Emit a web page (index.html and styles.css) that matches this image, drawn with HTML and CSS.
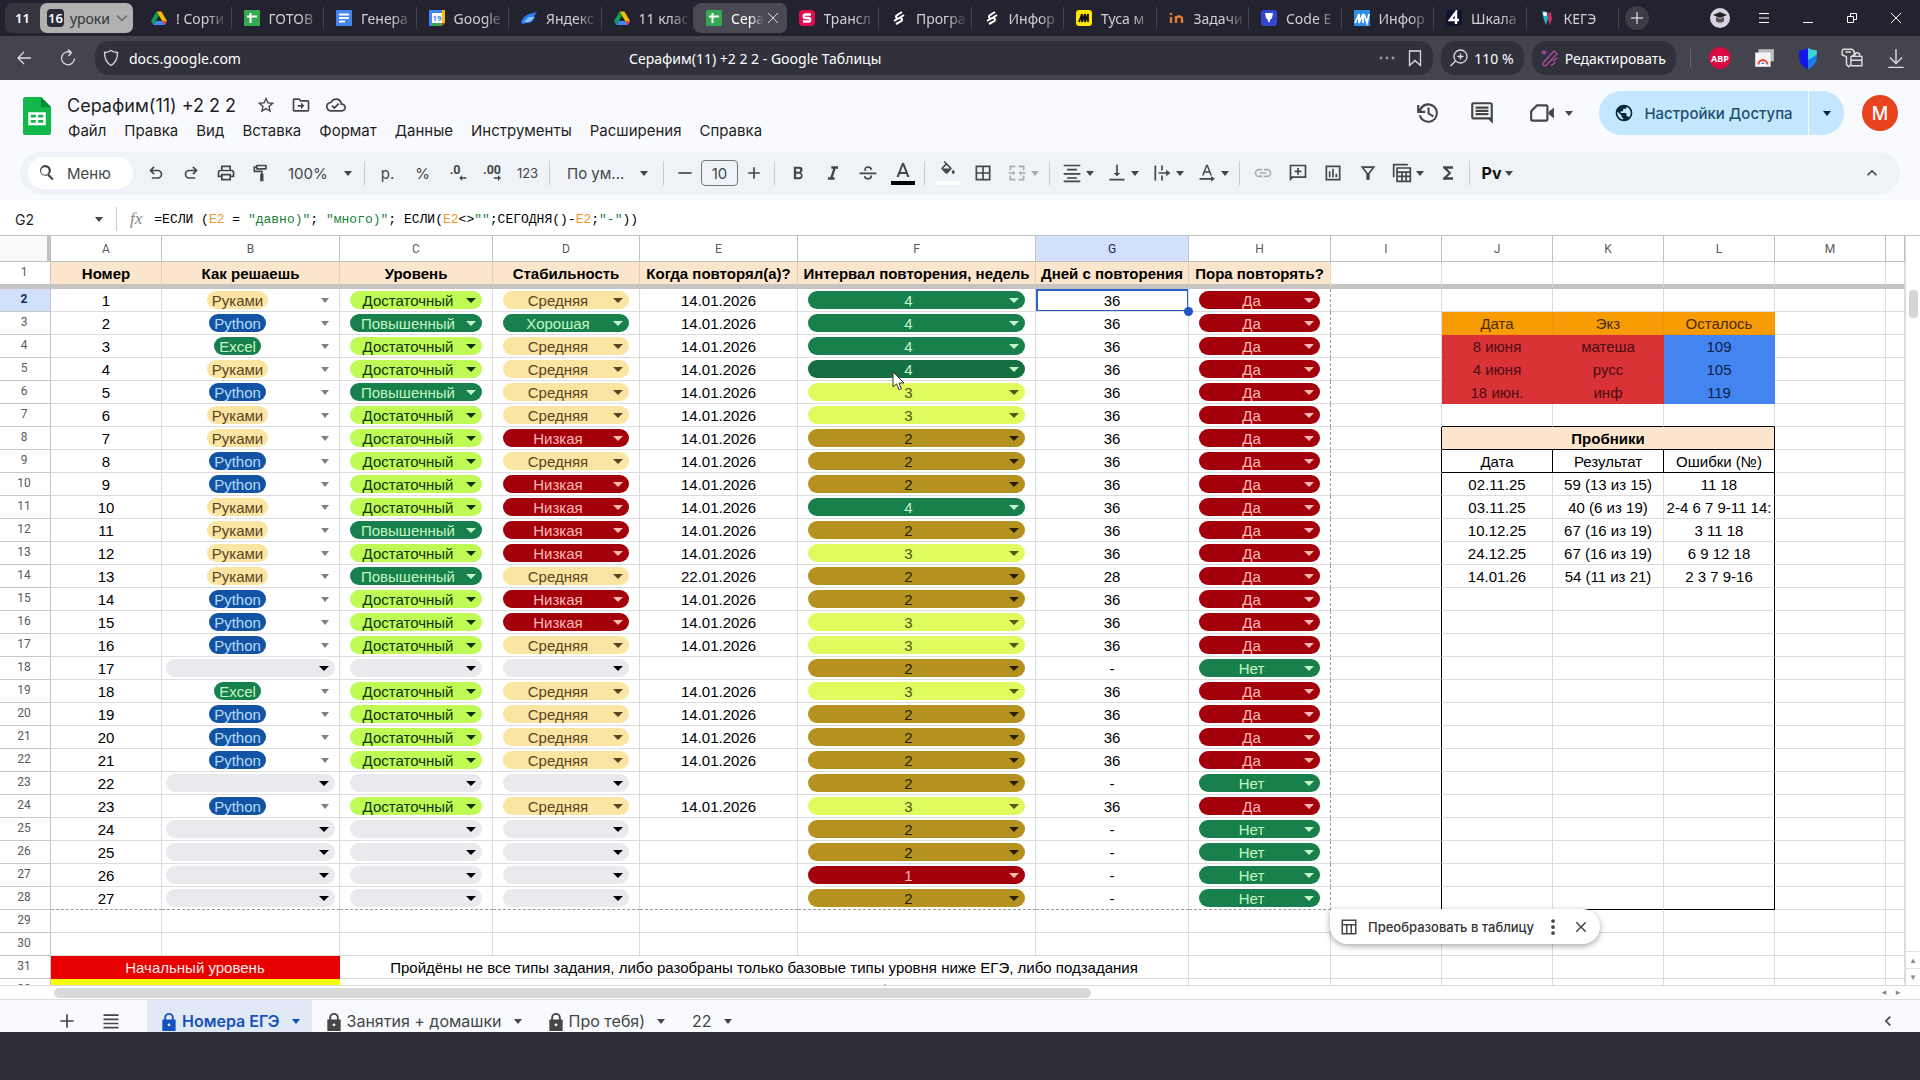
FILE: index.html
```html
<!DOCTYPE html>
<html lang="ru">
<head>
  <meta charset="UTF-8" />
  <meta name="viewport" content="width=device-width, initial-scale=1.0" />
  <title>Серафим(11) +2 2 2 - Google Таблицы</title>
  <link rel="stylesheet" href="styles.css">
</head>
<body>
  <!-- Browser tabs -->
  <div class="tabbar">
    <div class="tab-group">
      <button class="group-count">11</button>
      <button class="group-open"><b>16</b> уроки
        <svg width="12" height="8" viewBox="0 0 12 8"><path d="M1 1.5l5 5 5-5" fill="none" stroke="#666" stroke-width="1.4"/></svg>
      </button>
    </div>
    <nav class="tabs">
      <a class="tab" href="#"><svg viewBox="0 0 16 16"><path d="M5.6 1.5h4.8L16 11h-4.8z" fill="#fbbc04"/><path d="M5.6 1.5L0 11l2.4 4L8 5.6z" fill="#0f9d58"/><path d="M4.8 11H16l-2.4 4H2.4z" fill="#4285f4"/><path d="M11.2 11H16l-2.4 4z" fill="#ea4335"/></svg><span>! Сорти</span></a>
      <a class="tab" href="#"><svg viewBox="0 0 16 16"><rect width="16" height="16" rx="1" fill="#34a853"/><path d="M6.5 3v10M3 6.5h10" stroke="#fff" stroke-width="2"/></svg><span>ГОТОВ</span></a>
      <a class="tab" href="#"><svg viewBox="0 0 16 16"><rect width="16" height="16" rx="1" fill="#4285f4"/><path d="M3 4.5h10M3 8h10M3 11.5h6" stroke="#fff" stroke-width="2"/></svg><span>Генера</span></a>
      <a class="tab" href="#"><svg viewBox="0 0 16 16"><path d="M0 0h13v3H3v13H0z" fill="#4285f4"/><path d="M13 0h3v13h-3z" fill="#fbbc04"/><path d="M3 13h10v3H3z" fill="#34a853"/><path d="M13 13h3l-3 3z" fill="#ea4335"/><rect x="3" y="3" width="10" height="10" fill="#fff"/><text x="8" y="11" class="cal-day">19</text></svg><span>Google</span></a>
      <a class="tab" href="#"><svg viewBox="0 0 16 16"><path d="M0 12C3 5 7 4 16 2l-3 4 1 1c-2 5-5 6-8 6l-5 1z" fill="#2f7df6"/><path d="M3 12l5-5 5 0c-2 4-5 5-7 5z" fill="#8ec5ff"/></svg><span>Яндекс</span></a>
      <a class="tab" href="#"><svg viewBox="0 0 16 16"><path d="M5.6 1.5h4.8L16 11h-4.8z" fill="#fbbc04"/><path d="M5.6 1.5L0 11l2.4 4L8 5.6z" fill="#0f9d58"/><path d="M4.8 11H16l-2.4 4H2.4z" fill="#4285f4"/><path d="M11.2 11H16l-2.4 4z" fill="#ea4335"/></svg><span>11 клас</span></a>
      <a class="tab active" href="#"><svg viewBox="0 0 16 16"><rect width="16" height="16" rx="1" fill="#34a853"/><path d="M6.5 3v10M3 6.5h10" stroke="#fff" stroke-width="2"/></svg><span>Сера</span><i class="tab-close"></i></a>
      <a class="tab" href="#"><svg viewBox="0 0 16 16"><rect width="16" height="16" rx="4" fill="#e5094f"/><path d="M12 4.5H6.5a1.7 1.7 0 0 0 0 3.5h3a1.7 1.7 0 0 1 0 3.5H4" fill="none" stroke="#fff" stroke-width="2.4"/></svg><span>Трансл</span></a>
      <a class="tab" href="#"><svg viewBox="0 0 16 16"><path d="M11 2L5.500 5.500a2 2 0 0 0 1 3.200l3-1a2 2 0 0 1 1 3.300L5 14M13 5l-4 2.500M3 11l4-2.500" fill="none" stroke="#fff" stroke-width="2"/></svg><span>Програ</span></a>
      <a class="tab" href="#"><svg viewBox="0 0 16 16"><path d="M11 2L5.500 5.500a2 2 0 0 0 1 3.200l3-1a2 2 0 0 1 1 3.300L5 14M13 5l-4 2.500M3 11l4-2.500" fill="none" stroke="#fff" stroke-width="2"/></svg><span>Инфор</span></a>
      <a class="tab" href="#"><svg viewBox="0 0 16 16"><rect width="16" height="16" rx="3" fill="#ffe600"/><path d="M3 12l3-8v8l3-8v8l3-8v8" fill="none" stroke="#111" stroke-width="1.8"/></svg><span>Туса м</span></a>
      <a class="tab" href="#"><svg viewBox="0 0 16 16"><path d="M2 7v6M2 3v2M7 13V6M7 9c0-3 6-3.500 6 0v4" fill="none" stroke="#e07b39" stroke-width="2.400"/></svg><span>Задачи</span></a>
      <a class="tab" href="#"><svg viewBox="0 0 16 16"><rect width="16" height="16" rx="3" fill="#3346d3"/><path d="M4 3h8l-1 5-2 2v2H7v-2L5 8z" fill="#fff"/></svg><span>Code E</span></a>
      <a class="tab" href="#"><svg viewBox="0 0 16 16"><rect width="16" height="16" fill="#2f8fe6"/><path d="M1 13l4-9v9l4-9v9M10 4l3 9 2-9" fill="none" stroke="#fff" stroke-width="1.800"/></svg><span>Инфор</span></a>
      <a class="tab" href="#"><svg viewBox="0 0 16 16"><rect width="16" height="16" rx="3" fill="#12122e"/><path d="M10 14V2L4 10h9" fill="none" stroke="#fff" stroke-width="2.400"/></svg><span>Шкала</span></a>
      <a class="tab" href="#"><svg viewBox="0 0 16 16"><path d="M3 1l5 1 1 6-2 7-2-5z" fill="#28b4c8"/><path d="M9 3l3-1 1 7-2 6-2-5z" fill="#c0305a"/><circle cx="6" cy="4" r="2" fill="#fff"/></svg><span>КЕГЭ</span></a>
    </nav>
    <div class="window-tools">
      <button class="new-tab" aria-label="Новая вкладка"><svg viewBox="0 0 16 16"><path d="M8 2v12M2 8h12"/></svg></button>
      <button aria-label="Профиль"><svg class="profile" viewBox="0 0 20 20"><circle cx="10" cy="10" r="10" fill="#d8d2e0" stroke="none"/><path d="M10 4l7 3-7 3-7-3z" fill="#222" stroke="none"/><path d="M6 9v4c2 2 6 2 8 0V9l-4 2z" fill="#555" stroke="none"/></svg></button>
      <button aria-label="Меню"><svg viewBox="0 0 16 16"><path d="M3 3.500h10M3 8h10M3 12.500h10"/></svg></button>
      <button aria-label="Свернуть"><svg viewBox="0 0 16 16"><path d="M3 12.500h10"/></svg></button>
      <button aria-label="Развернуть"><svg viewBox="0 0 16 16"><path d="M3.500 6.500h6v6h-6zM6.500 6.500v-3h6v6h-3"/></svg></button>
      <button aria-label="Закрыть"><svg viewBox="0 0 16 16"><path d="M3 3l10 10M13 3L3 13"/></svg></button>
    </div>
  </div>

  <!-- Address bar -->
  <div class="navbar">
    <button class="nav-btn" aria-label="Назад"><svg viewBox="0 0 20 20"><path d="M17 10H4M10 4l-6 6 6 6"/></svg></button>
    <button class="nav-btn" aria-label="Обновить"><svg viewBox="0 0 20 20"><path d="M16.500 10.500a6.500 6.500 0 1 1-3.500-6M10 1.500l3.500 3-3 3.500"/></svg></button>
    <div class="address">
      <svg viewBox="0 0 20 20"><path d="M10 2.500c2 1.300 4 2 6.500 2 0 5-1.500 10-6.500 13-5-3-6.500-8-6.500-13 2.500 0 4.500-.7 6.500-2z"/></svg>
      <span class="host">docs.google.com</span>
      <span class="page-title">Серафим(11) +2 2 2 - Google Таблицы</span>
      <svg viewBox="0 0 20 20"><g fill="#999" stroke="none"><circle cx="4" cy="10" r="1.400"/><circle cx="10" cy="10" r="1.400"/><circle cx="16" cy="10" r="1.400"/></g></svg>
      <svg viewBox="0 0 20 20"><path d="M4.500 3h11v14.500L10 12.500l-5.500 5z"/></svg>
    </div>
    <button class="nav-pill"><svg viewBox="0 0 20 20"><path d="M7 12.500L1.500 18M11.500 2a6.500 6.500 0 1 1 0 13 6.500 6.500 0 0 1 0-13zM11.500 5.500v6M8.500 8.500h6"/></svg>110 %</button>
    <button class="nav-pill"><svg viewBox="0 0 20 20"><path d="M3 15L14 3l3 3L6 17.500c-1.500 1-4-1-3-2.500zM13 13l4-3M4 2v5M1.500 4.500h5M11 17c2 0 3-1 4-3" stroke="#b04aa6"/></svg>Редактировать</button>
    <i class="nav-sep"></i>
    <button class="nav-btn ext" aria-label="Adblock Plus"><svg viewBox="0 0 22 22"><circle cx="11" cy="11" r="11" fill="#d90b42" stroke="none"/><text x="11" y="14.500" class="abp">ABP</text></svg></button>
    <button class="nav-btn ext" aria-label="Снимок экрана"><svg viewBox="0 0 20 20"><path d="M5 2h14v11H5z" fill="#bbb" stroke="none"/><path d="M2 5h14v13H2z" fill="#f4f4f4" stroke="none"/><path d="M4 16a5 5 0 0 1 10 0z" fill="#e8453c" stroke="none"/><path d="M6.500 16a2.500 2.500 0 0 1 5 0z" fill="#4285f4" stroke="#fff"/></svg></button>
    <button class="nav-btn ext" aria-label="Защита"><svg viewBox="0 0 20 20"><path d="M10 1c-2.500 1.500-5 2-8 2v6c0 5 3 9 8 11z" fill="#1016e8" stroke="none"/><path d="M10 1c2.500 1.500 5 2 8 2v6c0 5-3 9-8 11z" fill="#1e7bea" stroke="none"/><path d="M10 1c2.500 1.500 5 2 8 2v4l-8 5z" fill="#3fd0d8" stroke="none"/></svg></button>
    <button class="nav-btn ext" aria-label="Пароли"><svg viewBox="0 0 20 20"><path d="M2 2h8l2 2v3l-3 2v7l-2 2-2-2V9L1 7V3.500zM4 4.500h5M12.500 8.500V7.500a2 2 0 0 1 4.500 0v1M9 8.500h10V17H9M9 12h10"/></svg></button>
    <button class="nav-btn ext" aria-label="Загрузки"><svg viewBox="0 0 20 20"><path d="M10 2v13M4.500 9.500L10 15l5.500-5.500M3 18.500h14"/></svg></button>
  </div>

  <!-- Document header -->
  <header class="doc-header">
    <svg class="sheets-logo" viewBox="0 0 28 38"><path d="M2.500 0H18l10 10v25.500a2.500 2.500 0 0 1-2.500 2.500h-23A2.500 2.500 0 0 1 0 35.500v-33A2.500 2.500 0 0 1 2.500 0z" fill="#12b74a"/><path d="M18 0l10 10H18z" fill="#078a35"/><path d="M6.500 16.500h15v10.500h-15zM14 16.500V27M6.500 21.800h15" fill="none" stroke="#fff" stroke-width="2.500"/></svg>
    <div class="doc-info">
      <div class="doc-title">
        <h1>Серафим(11) +2 2 2</h1>
        <button class="icon-btn small" aria-label="Пометить"><svg viewBox="0 0 24 24"><path d="M22 9.240l-7.190-.62L12 2 9.190 8.630 2 9.240l5.460 4.730L5.820 21 12 17.270 18.180 21l-1.630-7.030L22 9.240zM12 15.400l-3.760 2.270 1-4.280-3.320-2.880 4.380-.38L12 6.100l1.710 4.040 4.380.38-3.320 2.880 1 4.280L12 15.400z"/></svg></button>
        <button class="icon-btn small" aria-label="Переместить"><svg viewBox="0 0 24 24"><path d="M20 6h-8l-2-2H4c-1.100 0-2 .9-2 2v12c0 1.100.9 2 2 2h16c1.100 0 2-.9 2-2V8c0-1.100-.9-2-2-2zm0 12H4V6h5.200l2 2H20v10zm-8-1l4-4-4-4v3H8v2h4z"/></svg></button>
        <button class="icon-btn small" aria-label="Сохранено"><svg viewBox="0 0 24 24"><path d="M19.350 10.040A7.490 7.490 0 0 0 12 4C9.110 4 6.600 5.640 5.350 8.040A5.994 5.994 0 0 0 0 14c0 3.310 2.690 6 6 6h13c2.760 0 5-2.240 5-5 0-2.640-2.050-4.780-4.650-4.960zM19 18H6c-2.210 0-4-1.790-4-4s1.790-4 4-4h.71C7.370 7.690 9.480 6 12 6c3.040 0 5.500 2.460 5.500 5.500v.5H19c1.660 0 3 1.340 3 3s-1.340 3-3 3zm-9-3.800L7.900 12.100 6.500 13.500 10 17l6-6-1.400-1.400z"/></svg></button>
      </div>
      <nav class="menu">
        <a href="#">Файл</a><a href="#">Правка</a><a href="#">Вид</a><a href="#">Вставка</a><a href="#">Формат</a><a href="#">Данные</a><a href="#">Инструменты</a><a href="#">Расширения</a><a href="#">Справка</a>
      </nav>
    </div>
    <div class="doc-actions">
      <button class="icon-btn" aria-label="История версий"><svg viewBox="0 0 24 24"><path d="M12.500 3A9 9 0 0 0 4 8.300V4.500H2V12h7.500v-2H5.600A7 7 0 1 1 5.500 14H3.400a9 9 0 1 0 9.100-11zM11.500 7v6l5 3 1-1.600-4-2.400V7z"/></svg></button>
      <button class="icon-btn" aria-label="Комментарии"><svg viewBox="0 0 24 24"><path d="M22 4c0-1.100-.9-2-2-2H4c-1.100 0-2 .9-2 2v12c0 1.100.9 2 2 2h14l4 4V4zM4 16V4h16v12zm2-4h12v2H6zm0-3h12v2H6zm0-3h12v2H6z"/></svg></button>
      <button class="icon-btn meet" aria-label="Видеовстреча"><svg viewBox="0 0 24 24"><path d="M7 4h9c1.100 0 2 .9 2 2v12c0 1.100-.9 2-2 2H3c-1.100 0-2-.9-2-2v-8zm.8 2L3 10.800V18h13V6z"/><path d="M18 11l5-4v10l-5-4z"/></svg><i class="caret"></i></button>
      <div class="share">
        <button class="share-main"><svg viewBox="0 0 24 24"><path d="M12 2a10 10 0 1 0 0 20 10 10 0 0 0 0-20zm-1 17.930A7.990 7.990 0 0 1 4.210 10.200L9 15v1c0 1.100.9 2 2 2v1.930zm6.900-2.540A2 2 0 0 0 16 16h-1v-3c0-.55-.45-1-1-1H8v-2h2c.55 0 1-.45 1-1V7h2c1.100 0 2-.9 2-2v-.41a7.990 7.990 0 0 1 2.900 12.800z"/></svg>Настройки Доступа</button>
        <button class="share-more" aria-label="Ещё"><i class="caret"></i></button>
      </div>
      <button class="avatar">M</button>
    </div>
  </header>

  <!-- Toolbar -->
  <div class="toolbar-wrap">
    <div class="toolbar">
      <button class="menu-search"><svg viewBox="0 0 24 24"><path d="M15.500 14h-.79l-.28-.27A6.500 6.500 0 1 0 13 14.700l.27.28v.79l5 5L20 19.300zM9.500 14a4.500 4.500 0 1 1 0-9 4.500 4.500 0 0 1 0 9z"/></svg>Меню</button>
      <button class="tool" aria-label="Отменить"><svg viewBox="0 0 24 24"><path d="M7 19v-2h7.100a3.500 3.500 0 0 0 0-7H7.800l2.600 2.600L9 14 4 9l5-5 1.400 1.400L7.800 8h6.300a5.500 5.500 0 0 1 0 11z"/></svg></button>
      <button class="tool" aria-label="Повторить"><svg viewBox="0 0 24 24"><path d="M17 19v-2H9.900a3.500 3.500 0 0 1 0-7h6.300l-2.600 2.600L15 14l5-5-5-5-1.400 1.400L16.200 8H9.900a5.500 5.500 0 0 0 0 11z"/></svg></button>
      <button class="tool" aria-label="Печать"><svg viewBox="0 0 24 24"><path d="M19 8h-1V3H6v5H5a3 3 0 0 0-3 3v6h4v4h12v-4h4v-6a3 3 0 0 0-3-3zM8 5h8v3H8zm8 14H8v-4h8zm2-4v-2H6v2H4v-4c0-.55.45-1 1-1h14c.55 0 1 .45 1 1v4z"/></svg></button>
      <button class="tool" aria-label="Формат по образцу"><svg viewBox="0 0 24 24"><path d="M18 2H7a1 1 0 0 0-1 1v1H3v7h9v2h-1v9h4v-9h-1V9H5V6h1v1a1 1 0 0 0 1 1h11a1 1 0 0 0 1-1V3a1 1 0 0 0-1-1zm-1 4H8V4h9z"/></svg></button>
      <label class="tool-select zoom"><select aria-label="Масштаб"><option>100%</option></select><i class="caret"></i></label>
      <i class="sep"></i>
      <button class="tool">р.</button>
      <button class="tool">%</button>
      <button class="tool" aria-label="Меньше знаков"><svg viewBox="0 0 24 24"><text x="2" y="13" class="dec">.0</text><path d="M22 17h-5v-2.500L13.500 18l3.500 3.500V19h5z"/></svg></button>
      <button class="tool" aria-label="Больше знаков"><svg viewBox="0 0 24 24"><text x="0" y="13" class="dec">.00</text><path d="M13 17h5v-2.500l3.500 3.500-3.500 3.500V19h-5z"/></svg></button>
      <button class="tool n123">123</button>
      <i class="sep"></i>
      <label class="tool-select font"><select aria-label="Шрифт"><option>По ум...</option></select><i class="caret"></i></label>
      <i class="sep"></i>
      <button class="tool step" aria-label="Меньше"><svg viewBox="0 0 24 24"><path d="M4 11h16v2H4z"/></svg></button>
      <input class="font-size" type="text" value="10" aria-label="Размер шрифта">
      <button class="tool step" aria-label="Больше"><svg viewBox="0 0 24 24"><path d="M5 11h6V5h2v6h6v2h-6v6h-2v-6H5z"/></svg></button>
      <i class="sep"></i>
      <button class="tool" aria-label="Полужирный"><svg viewBox="0 0 24 24"><path d="M15.600 11.800A4 4 0 0 0 17.500 8.500 4 4 0 0 0 13.500 4.500H7v15h7.100a4.200 4.200 0 0 0 1.500-7.700zM9.800 7h3a1.800 1.800 0 0 1 0 3.600h-3zm3.700 10H9.800v-4h3.700a2 2 0 0 1 0 4z"/></svg></button>
      <button class="tool" aria-label="Курсив"><svg viewBox="0 0 24 24"><path d="M10 4v3h2.210l-3.420 10H6v3h8v-3h-2.210l3.420-10H18V4z"/></svg></button>
      <button class="tool" aria-label="Зачеркнутый"><svg viewBox="0 0 24 24"><path d="M2 11.500h20v2H2zM12 4c3 0 5 1.500 5 4h-2.300c0-1.300-1-2-2.700-2s-2.700.7-2.700 1.700c0 .7.500 1.200 1.500 1.600H7.500C7 6 9 4 12 4zM14.600 15h2.300c.5 3-1.800 5-4.900 5s-5-1.700-5-4h2.300c0 1.300 1 2 2.700 2 2 0 3-1 2.600-3z"/></svg></button>
      <button class="tool text-color" aria-label="Цвет текста"><svg viewBox="0 0 24 24"><path d="M11 2L5.500 16h2.250l1.120-3h6.250l1.120 3h2.250L13 2zm-1.380 9L12 4.670 14.380 11z"/><path d="M0 20h24v4H0z" fill="#000"/></svg></button>
      <i class="sep"></i>
      <button class="tool text-color" aria-label="Заливка"><svg viewBox="0 0 24 24"><g transform="translate(3 0) scale(.75)"><path d="M16.560 8.940L7.620 0 6.210 1.410l2.380 2.380-5.150 5.150a1.490 1.490 0 0 0 0 2.120l5.500 5.500a1.500 1.500 0 0 0 2.120 0l5.500-5.500c.59-.58.59-1.530 0-2.120zM5.210 10L10 5.210 14.790 10zM19 11.500s-2 2.170-2 3.500a2 2 0 0 0 4 0c0-1.330-2-3.500-2-3.500z"/></g><path d="M0 20h24v4H0z" fill="#fff"/></svg></button>
      <button class="tool" aria-label="Границы"><svg viewBox="0 0 24 24"><path d="M3 3v18h18V3zm8 16H5v-6h6zm0-8H5V5h6zm8 8h-6v-6h6zm0-8h-6V5h6z"/></svg></button>
      <button class="tool wide off" aria-label="Объединить"><svg viewBox="0 0 24 24"><path d="M3 3h7v2H5v4H3zM14 3h7v6h-2V5h-5zM3 15h2v4h5v2H3zM19 15h2v6h-7v-2h5zM2 11h5V9l3 3-3 3v-2H2zM22 11h-5V9l-3 3 3 3v-2h5z"/></svg><i class="caret"></i></button>
      <i class="sep"></i>
      <button class="tool wide" aria-label="По горизонтали"><svg viewBox="0 0 24 24"><path d="M2 2h20v2H2zM6 7h12v2H6zM2 12h20v2H2zM6 17h12v2H6zM2 21h20v2H2z"/></svg><i class="caret"></i></button>
      <button class="tool wide" aria-label="По вертикали"><svg viewBox="0 0 24 24"><path d="M16 12h-3V2h-2v10H8l4 4zM3 19v2h18v-2z"/></svg><i class="caret"></i></button>
      <button class="tool wide" aria-label="Перенос"><svg viewBox="0 0 24 24"><path d="M3 3h2v18H3zM11 3h2v6h-2zM11 15h2v6h-2zM8 11h9V8l5 4-5 4v-3H8z"/></svg><i class="caret"></i></button>
      <button class="tool wide" aria-label="Поворот текста"><svg viewBox="0 0 24 24"><path d="M11 2L6 15h2l1.200-3.200h5.600L16 15h2L13 2zm-1.200 8L12 4.300 14.200 10zM3 18h14v-2.500l4.500 3.500-4.500 3.500V20H3z"/></svg><i class="caret"></i></button>
      <i class="sep"></i>
      <button class="tool off" aria-label="Ссылка"><svg viewBox="0 0 24 24"><path d="M3.900 12A3.100 3.100 0 0 1 7 8.900h4V7H7a5 5 0 0 0 0 10h4v-1.900H7A3.100 3.100 0 0 1 3.900 12zM8 13h8v-2H8zm9-6h-4v1.900h4a3.100 3.100 0 0 1 0 6.200h-4V17h4a5 5 0 0 0 0-10z"/></svg></button>
      <button class="tool" aria-label="Комментарий"><svg viewBox="0 0 24 24"><path d="M22 2H2v20l4-4h16zM4 4h16v12H4zM11 6h2v3h3v2h-3v3h-2v-3H8V9h3z"/></svg></button>
      <button class="tool" aria-label="Диаграмма"><svg viewBox="0 0 24 24"><path d="M3 3v18h18V3zm16 16H5V5h14zM7 10h2v7H7zm4-3h2v10h-2zm4 6h2v4h-2z"/></svg></button>
      <button class="tool" aria-label="Фильтр"><svg viewBox="0 0 24 24"><path d="M3 4l7 9v7h4v-7l7-9zm4.100 2h9.800L12 12.300z"/></svg></button>
      <button class="tool wide" aria-label="Режимы фильтрации"><svg viewBox="0 0 24 24"><path d="M1 1h18v2H3v14H1zM5 5v18h18V5zm2 2h14v3H7zm0 5h4v3H7zm6 0h3v3h-3zm5 0h3v3h-3zM7 17h4v4H7zm6 0h3v4h-3zm5 0h3v4h-3z" fill-rule="evenodd"/></svg><i class="caret"></i></button>
      <button class="tool" aria-label="Функции"><svg viewBox="0 0 24 24"><path d="M18 4H6v2l6.500 6L6 18v2h12v-3h-7l5-5-5-5h7z"/></svg></button>
      <i class="sep"></i>
      <button class="tool wide pv"><b>Pv</b><i class="caret"></i></button>
      <button class="tool collapse" aria-label="Скрыть меню"><svg viewBox="0 0 24 24"><path d="M12 8l-6 6 1.410 1.410L12 10.830l4.590 4.580L18 14z"/></svg></button>
    </div>
  </div>

  <!-- Formula bar -->
  <div class="formula-bar">
    <input class="name-box" type="text" value="G2" aria-label="Имя ячейки">
    <i class="caret"></i>
    <i class="sep"></i>
    <em class="fx">fx</em>
    <div class="formula" role="textbox" contenteditable="true" spellcheck="false" aria-label="Формула">=ЕСЛИ (<span class="ref">E2</span> = <span class="str">"давно)"</span>; <span class="str">"много)"</span>; ЕСЛИ(<span class="ref">E2</span>&lt;&gt;<span class="str">""</span>;СЕГОДНЯ()-<span class="ref">E2</span>;<span class="str">"-"</span>))</div>
  </div>

  <!-- Grid -->
  <main class="grid-area">
    <div class="grid">
      <table class="sheet">
        <colgroup>
          <col class="w-num"><col class="w-a"><col class="w-b"><col class="w-c"><col class="w-d"><col class="w-e"><col class="w-f"><col class="w-c"><col class="w-h"><col class="w-a"><col class="w-a"><col class="w-a"><col class="w-a"><col class="w-a"><col>
        </colgroup>
        <thead>
          <tr class="letters"><th class="corner"></th><th>A</th><th>B</th><th>C</th><th>D</th><th>E</th><th>F</th><th class="sel">G</th><th>H</th><th>I</th><th>J</th><th>K</th><th>L</th><th>M</th><th></th></tr>
          <tr class="frozen"><th class="num">1</th><th>Номер</th><th>Как решаешь</th><th>Уровень</th><th>Стабильность</th><th>Когда повторял(а)?</th><th>Интервал повторения, недель</th><th>Дней с повторения</th><th class="edge">Пора повторять?</th><td></td><td></td><td></td><td></td><td></td><td></td></tr>
        </thead>
        <tbody id="rows"></tbody>
      </table>
    </div>
    <div class="vscroll"><i class="thumb"></i><i class="arrow">▴</i><i class="arrow">▾</i></div>
  </main>
  <div class="hscroll"><i class="thumb"></i><i class="arrow">◂</i><i class="arrow">▸</i></div>

  <!-- Sheet tabs -->
  <footer class="sheet-tabs">
    <button class="icon-btn small add" aria-label="Добавить лист"><svg viewBox="0 0 24 24"><path d="M4 11h7V4h2v7h7v2h-7v7h-2v-7H4z"/></svg></button>
    <button class="icon-btn small all" aria-label="Все листы"><svg viewBox="0 0 24 24"><path d="M3 4h18v2H3zM3 9h18v2H3zM3 14h18v2H3zM3 19h18v2H3z"/></svg></button>
    <a class="sheet-tab active" href="#"><svg viewBox="0 0 14 20"><path d="M2 8V6a5 5 0 0 1 10 0v2h2v12H0V8zm2 0h6V6a3 3 0 0 0-6 0zm3 4a1.500 1.500 0 1 0 0 3 1.500 1.500 0 0 0 0-3z"/></svg>Номера ЕГЭ<i class="caret"></i></a>
    <a class="sheet-tab" href="#"><svg viewBox="0 0 14 20"><path d="M2 8V6a5 5 0 0 1 10 0v2h2v12H0V8zm2 0h6V6a3 3 0 0 0-6 0zm3 4a1.500 1.500 0 1 0 0 3 1.500 1.500 0 0 0 0-3z"/></svg>Занятия + домашки<i class="caret"></i></a>
    <a class="sheet-tab" href="#"><svg viewBox="0 0 14 20"><path d="M2 8V6a5 5 0 0 1 10 0v2h2v12H0V8zm2 0h6V6a3 3 0 0 0-6 0zm3 4a1.500 1.500 0 1 0 0 3 1.500 1.500 0 0 0 0-3z"/></svg>Про тебя)<i class="caret"></i></a>
    <a class="sheet-tab" href="#">22<i class="caret"></i></a>
    <button class="icon-btn small side" aria-label="Боковая панель"><svg viewBox="0 0 24 24"><path d="M15.400 7.400L14 6l-6 6 6 6 1.400-1.400L10.800 12z"/></svg></button>
  </footer>
  <div class="bottom-strip"></div>

  <script src="script.js"></script>
</body>
</html>
```
FILE: styles.css
```css
* {
  box-sizing: border-box;
}
body {
  margin: 0;
  height: 100vh;
  display: flex;
  flex-direction: column;
  overflow: hidden;
  font-family: Inter, Roboto, sans-serif;
  font-size: 15px;
  color: #1f1f1f;
  background: #fff;
}
button, input, select {
  font: inherit;
  color: inherit;
  border: none;
  background: none;
  padding: 0;
  margin: 0;
}
button {
  cursor: pointer;
  white-space: nowrap;
}
a {
  color: inherit;
  text-decoration: none;
}
svg {
  flex: none;
}
.caret {
  flex: none;
  border: 4px solid transparent;
  border-top: 5px solid #444746;
  border-bottom: none;
}

/* browser tabs */
.tabbar {
  display: flex;
  align-items: center;
  height: 36px;
  padding: 0 2px 0 5px;
  background: #23232f;
  color: #d0d0d6;
  font-family: "Noto Sans", sans-serif;
  font-size: 14px;
}
.tab-group {
  display: flex;
  height: 30px;
  border-radius: 7px;
  background: #35353f;
}
.group-count {
  width: 35px;
  font-size: 13px;
  font-weight: 600;
  color: #fff;
}
.group-open {
  display: flex;
  align-items: center;
  gap: 6px;
  width: 93px;
  padding-left: 7px;
  border-radius: 7px;
  background: #b1b1b3;
  color: #333;
}
.group-open b {
  padding: 0 1px;
  border-radius: 4px;
  background: #2b2b35;
  color: #fff;
  font-size: 13px;
  font-weight: 600;
}
.tabs {
  flex: 1;
  display: flex;
  margin-left: 6px;
}
.tab {
  flex: 1;
  display: flex;
  align-items: center;
  gap: 9px;
  min-width: 0;
  height: 30px;
  padding-left: 12px;
  position: relative;
}
.tab::after {
  content: "";
  position: absolute;
  right: 0;
  top: 4px;
  height: 22px;
  border-right: 1px solid #44444f;
}
.tab svg {
  width: 16px;
  height: 16px;
}
.tab span {
  width: 52px;
  white-space: nowrap;
  mask-image: linear-gradient(to right, #000 60%, transparent);
}
.tab.active {
  background: #4a4a55;
  border-radius: 7px;
  color: #fff;
}
.tab.active::after {
  display: none;
}
.tab.active span {
  width: 33px;
}
.tab-close {
  width: 10px;
  height: 10px;
  margin-left: -5px;
  background:
    linear-gradient(45deg, transparent 46%, #ddd 46%, #ddd 54%, transparent 54%),
    linear-gradient(-45deg, transparent 46%, #ddd 46%, #ddd 54%, transparent 54%);
}
.cal-day {
  font: bold 8px Roboto, sans-serif;
  fill: #4285f4;
  text-anchor: middle;
}
.window-tools {
  display: flex;
  width: 299px;
}
.window-tools button {
  display: flex;
  align-items: center;
  justify-content: center;
  width: 44px;
  height: 30px;
}
.window-tools svg {
  width: 16px;
  height: 16px;
  fill: none;
  stroke: #fff;
}
.window-tools .profile {
  width: 20px;
  height: 20px;
}
.window-tools .new-tab {
  width: 24px;
  height: 24px;
  margin: 3px auto 3px 6px;
  border-radius: 50%;
  background: #3d3d48;
}

/* address bar */
.navbar {
  display: flex;
  align-items: center;
  height: 44px;
  padding: 0 2px;
  background: #44444f;
  color: #fff;
  font-family: "Noto Sans", sans-serif;
  font-size: 14px;
}
.navbar svg {
  width: 20px;
  height: 20px;
  fill: none;
  stroke: #ddd;
  stroke-width: 1.3;
}
.nav-btn {
  display: flex;
  align-items: center;
  justify-content: center;
  width: 44px;
  height: 32px;
}
.address {
  flex: 1;
  display: flex;
  align-items: center;
  gap: 8px;
  height: 34px;
  margin-left: 5px;
  padding: 0 8px 0 6px;
  border-radius: 14px;
  background: #31313c;
}
.page-title {
  flex: 1;
  padding-right: 108px;
  text-align: center;
}
.nav-pill {
  display: flex;
  align-items: center;
  gap: 5px;
  height: 34px;
  margin-left: 8px;
  padding: 0 10px 0 8px;
  border-radius: 14px;
  background: #31313c;
}
.nav-sep {
  height: 18px;
  margin: 0 7px 0 14px;
  border-left: 1px solid #666672;
}
.navbar .ext svg {
  width: 22px;
  height: 22px;
}
.abp {
  font: bold 9px "Noto Sans", sans-serif;
  fill: #fff;
  stroke: none;
  text-anchor: middle;
}

/* document header */
.doc-header {
  display: flex;
  height: 72px;
  padding: 10px 22px 0 23px;
  background: #f9fafd;
}
.sheets-logo {
  width: 28px;
  height: 38px;
  margin-top: 7px;
}
.doc-info {
  flex: 1;
  padding-left: 16px;
}
.doc-title {
  display: flex;
  align-items: center;
  gap: 15px;
  height: 30px;
}
.doc-title h1 {
  margin: 0 5px 0 0;
  font-size: 18px;
  font-weight: 400;
}
.icon-btn {
  display: flex;
  align-items: center;
  justify-content: center;
}
.icon-btn svg {
  width: 26px;
  height: 26px;
  fill: #444746;
}
.icon-btn.small svg {
  width: 20px;
  height: 20px;
}
.menu {
  display: flex;
  gap: 18px;
  height: 22px;
  line-height: 22px;
  padding-left: 1px;
}
.doc-actions {
  display: flex;
  align-items: center;
  gap: 28px;
  height: 46px;
}
.meet {
  gap: 10px;
  margin-left: 6px;
}
.share {
  display: flex;
  height: 44px;
  gap: 1px;
  margin-left: -2px;
  color: #1d4f6f;
  font-weight: 500;
}
.share button {
  display: flex;
  align-items: center;
  justify-content: center;
  background: #c2e7ff;
}
.share .share-main {
  width: 209px;
  gap: 10px;
  border-radius: 22px 0 0 22px;
}
.share .share-more {
  width: 35px;
  border-radius: 0 22px 22px 0;
}
.share svg {
  width: 20px;
  height: 20px;
  fill: #06273a;
}
.share .caret {
  border-top-color: #06273a;
}
.avatar {
  width: 36px;
  height: 36px;
  margin-left: -10px;
  border-radius: 50%;
  background: #e8421f;
  color: #fff;
  font-size: 18px;
  font-weight: 500;
}

/* toolbar */
.toolbar-wrap {
  height: 48px;
  padding: 0 20px;
  background: #f9fafd;
}
.toolbar {
  display: flex;
  align-items: center;
  height: 42px;
  padding: 0 11px 0 8px;
  border-radius: 21px;
  background: #eff3f8;
  color: #444746;
}
.toolbar svg {
  width: 20px;
  height: 20px;
  fill: #444746;
}
.menu-search {
  display: flex;
  align-items: center;
  gap: 10px;
  width: 105px;
  height: 32px;
  margin-right: 5px;
  padding-left: 9px;
  border-radius: 16px;
  background: #fff;
}
.tool {
  display: flex;
  align-items: center;
  justify-content: center;
  width: 35px;
  height: 34px;
}
.tool.wide {
  width: 45px;
  gap: 4px;
}
.tool.step {
  width: 32px;
}
.tool.off {
  opacity: 0.4;
}
.tool.n123 {
  font-size: 13px;
}
.tool.text-color svg {
  width: 24px;
  height: 24px;
}
.tool.collapse {
  margin-left: auto;
}
.toolbar .pv {
  font-size: 16px;
  color: #111;
}
.dec {
  font: bold 15px Roboto, sans-serif;
}
.sep {
  flex: none;
  height: 24px;
  margin: 0 5px 0 4px;
  border-left: 1px solid #c7cbd0;
}
.tool-select {
  display: flex;
  align-items: center;
  justify-content: space-between;
}
.tool-select select {
  appearance: none;
}
.zoom {
  width: 82px;
  padding: 0 8px 0 10px;
}
.font {
  width: 104px;
  padding: 0 11px 0 12px;
}
.font-size {
  width: 37px;
  height: 26px;
  border: 1px solid #747775;
  border-radius: 4px;
  text-align: center;
}

/* formula bar */
.formula-bar {
  display: flex;
  align-items: center;
  height: 35px;
  padding: 3px 15px 0;
}
.name-box {
  width: 80px;
  font-size: 14px;
}
.formula-bar .sep {
  margin: 0 13px;
}
.fx {
  font-family: "Liberation Serif", serif;
  font-size: 17px;
  color: #80868b;
}
.formula {
  flex: 1;
  margin-left: 12px;
  outline: none;
  font-family: "Liberation Mono", monospace;
  font-size: 13px;
  color: #000;
  white-space: pre;
}
.ref {
  color: #f0962d;
}
.str {
  color: #188038;
}

/* grid */
.grid-area {
  flex: 1;
  display: flex;
  min-height: 0;
  border-top: 1px solid #c0c0c0;
}
.grid {
  flex: 1;
  overflow: hidden;
}
.sheet {
  width: 100%;
  table-layout: fixed;
  border-spacing: 0;
  font-family: "Liberation Sans", Arial, sans-serif;
  color: #000;
}
.w-num { width: 51px; }
.w-a { width: 111px; }
.w-b { width: 178px; }
.w-c { width: 153px; }
.w-d { width: 147px; }
.w-e { width: 158px; }
.w-f { width: 238px; }
.w-h { width: 142px; }
.sheet td, .sheet th {
  height: 23px;
  padding: 0;
  border-right: 1px solid #dcdcdc;
  border-bottom: 1px solid #dcdcdc;
  line-height: 20px;
  text-align: center;
  vertical-align: bottom;
  white-space: nowrap;
}
.sheet .letters th {
  height: 26px;
  border-color: #c0c0c0;
  font-family: Roboto, sans-serif;
  font-size: 12px;
  font-weight: 400;
  color: #575b5f;
  vertical-align: middle;
}
.sheet .letters .sel {
  background: #d3e0fb;
  color: #0b2a5e;
}
.sheet .letters .corner {
  background: #f8f9fa;
  border-right: 4px solid #c0c0c0;
}
.sheet .num {
  padding-right: 2px;
  border-color: #c7c7c7;
  background: #fff;
  font-family: Roboto, sans-serif;
  font-size: 12px;
  font-weight: 400;
  color: #575b5f;
  vertical-align: top;
}
.sheet .num.sel {
  background: #d3e0fb;
  color: #0b2a5e;
  font-weight: 700;
}
.sheet .frozen th, .sheet .frozen td {
  height: 27px;
  border-bottom: 5px solid #c6c4c2;
}
.sheet .frozen th:not(.num) {
  background: #fce5cd;
  border-right-color: #e2cfba;
}
.sheet .edge {
  border-right: 1px dashed #9a9a9a;
}
.sheet .last td:nth-child(-n+9) {
  border-bottom: 1px dashed #9a9a9a;
}
.sheet .chip-cell {
  padding: 0 10px 2px;
}
.sheet .how {
  padding: 0 4px 2px;
}

/* drop-down chips */
.chip {
  display: flex;
  align-items: center;
  height: 18px;
  padding-right: 6px;
  border-radius: 9px;
}
.chip::after {
  content: "";
  border: 5px solid transparent;
  border-top-color: currentColor;
  border-bottom: none;
}
.chip select {
  flex: 1;
  min-width: 0;
  height: 18px;
  appearance: none;
  text-align: center;
  text-align-last: center;
}
.chip-text {
  justify-content: space-between;
}
.chip-text::after {
  border-width: 5px 4px 0;
  border-top-color: #808080;
}
.chip-text div {
  flex: 1;
  padding-right: 12px;
}
.chip-text select {
  display: block;
  field-sizing: content;
  height: 18px;
  margin: 0 auto;
  padding: 0 5px;
  border-radius: 9px;
}
.lime { background: #bffb54; color: #10330b; }
.green { background: #17804c; color: #c4f7c3; }
.green-hover { background: #156f42; color: #c4f7c3; }
.sand { background: #fbe5a2; color: #5a4424; }
.red { background: #a4000b; color: #ffb9b5; }
.yellow { background: #e0fb5e; color: #4f5914; }
.gold { background: #b5921f; color: #2b1d00; }
.blue { background: #1253a4; color: #b6dcfa; }
.empty { background: #e8eaed; color: #000; }

/* selected cell */
.sheet .selected {
  position: relative;
  box-shadow: inset 2px 2px #2c64c4, inset -1px -1px #2c64c4;
}
.handle {
  position: absolute;
  z-index: 2;
  right: -5px;
  bottom: -5px;
  width: 9px;
  height: 9px;
  border-radius: 50%;
  background: #1f58c0;
}

/* exam tables */
.sheet .orange { background: #f89c05; border-color: #f09605; color: #4a2c00; }
.sheet .exam { background: #d93237; border-color: #d23035; color: #4c0d0f; }
.sheet .left-days { background: #4484f0; border-color: #4484f0; color: #0b1f46; }
.sheet .bb { border-bottom-color: #000; }
.sheet .br { border-right-color: #000; }
.sheet .peach { background: #fce5cd; font-weight: 700; }
.sheet .clip { overflow: hidden; }
.sheet .start-level { background: #e80000; border-color: #e80000; color: #ffe9e9; }
.sheet .enough-level { background: #ff0; border-color: #ff0; }

.over {
  position: relative;
}
.pointer {
  position: absolute;
  z-index: 3;
  left: 94px;
  top: 13px;
  width: 13px;
  height: 20px;
}
.convert {
  position: absolute;
  z-index: 3;
  left: 100%;
  top: 100%;
  display: flex;
  align-items: center;
  width: 270px;
  height: 35px;
  padding: 0 10px;
  border-radius: 3px 18px 18px 18px;
  background: #fff;
  box-shadow: 0 2px 6px rgba(0, 0, 0, 0.35);
  font-family: Inter, Roboto, sans-serif;
  font-size: 13px;
  font-weight: 500;
  color: #333;
}
.convert button {
  display: flex;
  align-items: center;
  gap: 10px;
}
.convert svg {
  width: 18px;
  height: 18px;
  fill: #444746;
}
.convert .dots {
  margin: 0 10px 0 auto;
}

/* scrollbars */
.vscroll {
  display: flex;
  flex-direction: column;
  align-items: center;
  width: 15px;
  padding-top: 54px;
  border-left: 1px solid #dcdcdc;
}
.vscroll .thumb {
  width: 9px;
  height: 28px;
  margin-bottom: auto;
  border-radius: 4px;
  background: #d6d6d6;
}
.arrow {
  width: 14px;
  height: 17px;
  border-top: 1px solid #e4e4e4;
  font: 9px/16px "DejaVu Sans", sans-serif;
  text-align: center;
  color: #888;
}
.hscroll {
  display: flex;
  align-items: center;
  height: 15px;
  padding: 0 15px 0 54px;
  border-top: 1px solid #dcdcdc;
  border-bottom: 1px solid #dcdcdc;
  background: #fff;
}
.hscroll .thumb {
  width: 56%;
  height: 10px;
  margin-right: auto;
  border-radius: 5px;
  background: #d9d9d9;
}
.hscroll .arrow {
  border-top: none;
}

/* sheet tabs */
.sheet-tabs {
  display: flex;
  height: 32px;
  padding: 0 22px 0 57px;
  overflow: hidden;
  background: #f8fafd;
  color: #444746;
  font-size: 16px;
}
.sheet-tabs > * {
  height: 42px;
}
.sheet-tabs .all {
  margin: 0 26px 0 24px;
}
.sheet-tabs .side {
  margin-left: auto;
}
.sheet-tab {
  display: flex;
  align-items: center;
  gap: 6px;
  padding: 0 12px 0 15px;
}
.sheet-tab svg {
  width: 14px;
  height: 19px;
  fill: #444746;
}
.sheet-tab .caret {
  margin-left: 6px;
}
.sheet-tab.active {
  background: #e1e9f7;
  color: #1552bd;
  font-weight: 600;
}
.sheet-tab.active svg {
  fill: #1552bd;
}
.sheet-tab.active .caret {
  border-top-color: #1552bd;
}
.bottom-strip {
  height: 48px;
  background: #2f2f39;
}
```
FILE: script.js
```js
const DATE = '14.01.2026';

// [how, level, stability, date, interval, days]
const tasks = [
  ['Руками', 'Достаточный', 'Средняя', DATE, 4, 36],
  ['Python', 'Повышенный', 'Хорошая', DATE, 4, 36],
  ['Excel', 'Достаточный', 'Средняя', DATE, 4, 36],
  ['Руками', 'Достаточный', 'Средняя', DATE, 4, 36],
  ['Python', 'Повышенный', 'Средняя', DATE, 3, 36],
  ['Руками', 'Достаточный', 'Средняя', DATE, 3, 36],
  ['Руками', 'Достаточный', 'Низкая', DATE, 2, 36],
  ['Python', 'Достаточный', 'Средняя', DATE, 2, 36],
  ['Python', 'Достаточный', 'Низкая', DATE, 2, 36],
  ['Руками', 'Достаточный', 'Низкая', DATE, 4, 36],
  ['Руками', 'Повышенный', 'Низкая', DATE, 2, 36],
  ['Руками', 'Достаточный', 'Низкая', DATE, 3, 36],
  ['Руками', 'Повышенный', 'Средняя', '22.01.2026', 2, 28],
  ['Python', 'Достаточный', 'Низкая', DATE, 2, 36],
  ['Python', 'Достаточный', 'Низкая', DATE, 3, 36],
  ['Python', 'Достаточный', 'Средняя', DATE, 3, 36],
  ['', '', '', '', 2, '-'],
  ['Excel', 'Достаточный', 'Средняя', DATE, 3, 36],
  ['Python', 'Достаточный', 'Средняя', DATE, 2, 36],
  ['Python', 'Достаточный', 'Средняя', DATE, 2, 36],
  ['Python', 'Достаточный', 'Средняя', DATE, 2, 36],
  ['', '', '', '', 2, '-'],
  ['Python', 'Достаточный', 'Средняя', DATE, 3, 36],
  ['', '', '', '', 2, '-'],
  ['', '', '', '', 2, '-'],
  ['', '', '', '', 1, '-'],
  ['', '', '', '', 2, '-']
];

const colors = {
  '': 'empty',
  'Руками': 'sand', 'Python': 'blue', 'Excel': 'green',
  'Достаточный': 'lime', 'Повышенный': 'green',
  'Средняя': 'sand', 'Хорошая': 'green', 'Низкая': 'red',
  4: 'green', 3: 'yellow', 2: 'gold', 1: 'red',
  'Да': 'red', 'Нет': 'green'
};

const lists = {
  how: ['', 'Руками', 'Python', 'Excel'],
  level: ['', 'Достаточный', 'Повышенный'],
  stability: ['', 'Низкая', 'Средняя', 'Хорошая'],
  interval: [1, 2, 3, 4],
  due: ['Да', 'Нет']
};

// cells J..L by sheet row number
const trials = {
  10: ['02.11.25', '59 (13 из 15)', '11 18'],
  11: ['03.11.25', '40 (6 из 19)', '2-4 6 7 9-11 14:'],
  12: ['10.12.25', '67 (16 из 19)', '3 11 18'],
  13: ['24.12.25', '67 (16 из 19)', '6 9 12 18'],
  14: ['14.01.26', '54 (11 из 21)', '2 3 7 9-16']
};
const exams = {
  4: ['8 июня', 'матеша', 109],
  5: ['4 июня', 'русс', 105],
  6: ['18 июн.', 'инф', 119]
};

function select(list, value, cls, label) {
  const options = lists[list].map(v => `<option${v === value ? ' selected' : ''}>${v}</option>`).join('');
  return `<select class="${cls}" aria-label="${label}">${options}</select>`;
}

function chip(list, value, label, color) {
  return `<div class="chip ${color || colors[value]}">${select(list, value, '', label)}</div>`;
}

function howChip(value, label) {
  if (!value) return chip('how', value, label);
  return `<div class="chip chip-text"><div>${select('how', value, colors[value], label)}</div></div>`;
}

function sideCells(n) {
  if (n === 3) {
    return '<td></td><td class="orange">Дата</td><td class="orange">Экз</td><td class="orange">Осталось</td>';
  }
  if (exams[n]) {
    const [d, e, left] = exams[n];
    return `<td></td><td class="exam">${d}</td><td class="exam">${e}</td><td class="left-days">${left}</td>`;
  }
  if (n === 7) return '<td></td><td class="bb"></td><td class="bb"></td><td class="bb"></td>';
  if (n === 8) return '<td class="br"></td><td class="peach bb br" colspan="3">Пробники</td>';
  if (n === 9) return '<td class="br"></td><td class="bb br">Дата</td><td class="bb br">Результат</td><td class="bb br">Ошибки (№)</td>';
  if (n >= 10 && n <= 28) {
    const [d, r, e] = trials[n] || ['', '', ''];
    const bb = n === 28 ? 'bb' : '';
    return `<td class="br"></td><td class="${bb}">${d}</td><td class="${bb}">${r}</td><td class="clip br ${bb}">${e}</td>`;
  }
  return '<td></td><td></td><td></td><td></td>';
}

const pointer = '<svg class="pointer" viewBox="0 0 13 20"><path d="M1 1v15l3.500-3.200 2.600 6 2.400-1-2.600-5.800H12z" fill="#fff" stroke="#333"/></svg>';
const convert = `<div class="convert">
  <button><svg viewBox="0 0 24 24"><path d="M2 2v20h20V2zm18 2v4H4V4zM4 10h4v10H4zm6 10V10h4v10zm6 0V10h4v10z"/></svg>Преобразовать в таблицу</button>
  <button class="dots" aria-label="Ещё"><svg viewBox="0 0 24 24"><circle cx="12" cy="4" r="2.500"/><circle cx="12" cy="12" r="2.500"/><circle cx="12" cy="20" r="2.500"/></svg></button>
  <button aria-label="Закрыть"><svg viewBox="0 0 24 24"><path d="M19 6.400L17.600 5 12 10.600 6.400 5 5 6.400 10.600 12 5 17.600 6.400 19 12 13.400 17.600 19 19 17.600 13.400 12z"/></svg></button>
</div>`;

function render() {
  let html = '';
  tasks.forEach(([how, level, stability, date, interval, days], i) => {
    const n = i + 2;
    const due = days === '-' ? 'Нет' : 'Да';
    html += `<tr class="${n === 28 ? 'last' : ''}">
      <th class="num ${n === 2 ? 'sel' : ''}">${n}</th>
      <td>${i + 1}</td>
      <td class="how">${howChip(how, 'Как решаешь')}</td>
      <td class="chip-cell">${chip('level', level, 'Уровень')}</td>
      <td class="chip-cell">${chip('stability', stability, 'Стабильность')}</td>
      <td>${date}</td>
      <td class="chip-cell over">${chip('interval', interval, 'Интервал', n === 5 ? 'green-hover' : '')}${n === 5 ? pointer : ''}</td>
      <td class="${n === 2 ? 'selected' : ''}">${days}${n === 2 ? '<i class="handle"></i>' : ''}</td>
      <td class="chip-cell edge over">${chip('due', due, 'Пора повторять')}${n === 28 ? convert : ''}</td>
      ${sideCells(n)}<td></td><td></td>
    </tr>`;
  });

  for (let n = 29; n <= 33; n++) {
    html += `<tr><th class="num">${n}</th>`;
    if (n === 31) {
      html += '<td class="start-level" colspan="2">Начальный уровень</td><td colspan="5">Пройдёны не все типы задания, либо разобраны только базовые типы уровня ниже ЕГЭ, либо подзадания</td>';
    } else if (n === 32) {
      html += '<td class="enough-level" colspan="2">Достаточный уровень</td><td colspan="5">Решаются основные типы ЕГЭ, ошибки</td>';
    } else {
      html += '<td></td>'.repeat(7);
    }
    html += '<td></td>'.repeat(7) + '</tr>';
  }
  document.getElementById('rows').innerHTML = html;
}

render();
```
